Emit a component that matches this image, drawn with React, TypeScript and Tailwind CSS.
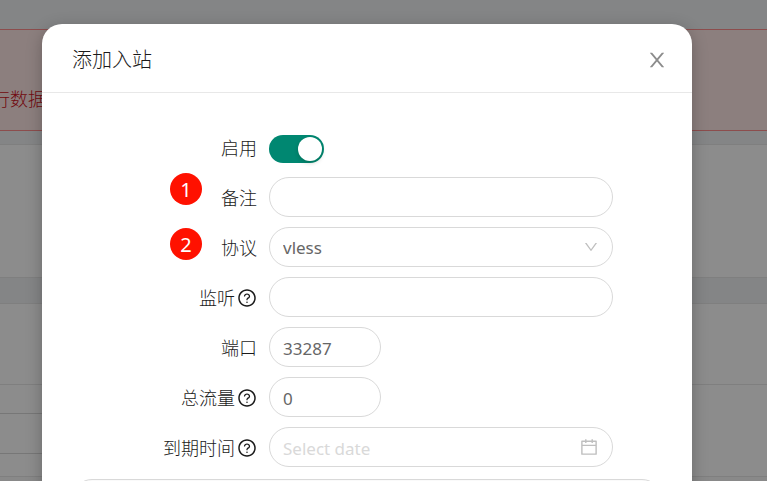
import React from 'react';
import { AiOutlineCalendar, AiOutlineDown, AiOutlineQuestionCircle } from 'react-icons/ai';

interface RowProps {
  label: string;
  htmlFor: string;
  help?: boolean;
  children: React.ReactNode;
}

const fieldClass =
  'h-10 rounded-full border border-[#d9d9d9] bg-white px-[13px] pt-0.5 text-[17px] font-normal text-[#666666] outline-none placeholder:text-[#d9d9d9]';

function FormRow({ label, htmlFor, help, children }: RowProps) {
  return (
    <div className="relative flex gap-3">
      <div className="flex h-10 w-[215px] shrink-0 items-center justify-end gap-0.5 pt-0.5 text-[#1a1a1a]">
        <label htmlFor={htmlFor} className="text-lg">
          {label}
        </label>
        {help && <AiOutlineQuestionCircle className="size-5" />}
      </div>
      {children}
    </div>
  );
}

function StepBadge({ step, className }: { step: number; className: string }) {
  return (
    <span
      className={`absolute left-32 flex size-8 items-center justify-center rounded-full bg-[#ff1100] pt-0.5 text-xl font-normal text-white ${className}`}
    >
      {step}
    </span>
  );
}

function CloseIcon() {
  return (
    <svg viewBox="64 64 896 896" className="size-5" fill="currentColor" aria-hidden="true">
      <path d="M563.8 512l262.5-312.9c4.4-5.2.7-13.1-6.1-13.1h-79.8c-4.7 0-9.2 2.1-12.3 5.7L511.6 449.8 295.1 191.7c-3-3.6-7.5-5.7-12.3-5.7H203c-6.8 0-10.5 7.9-6.1 13.1L459.4 512 196.9 824.9A7.95 7.95 0 0 0 203 838h79.8c4.7 0 9.2-2.1 12.3-5.7l216.5-258.1 216.5 258.1c3 3.6 7.5 5.7 12.3 5.7h79.8c6.8 0 10.5-7.9 6.1-13.1L563.8 512z" />
    </svg>
  );
}

function PageBackground() {
  return (
    <div className="flex min-h-screen flex-col bg-[#f0f2f5] pt-[29px]">
      <div className="h-[102px] border-y border-[#ff8c8c] bg-[#ffe8e6] pt-[55px] text-lg text-[#cf1322]">
        <div className="flex w-[46px] justify-end whitespace-nowrap">行数据</div>
      </div>
      <div className="mt-[13px] h-[134px] border-y border-[#e8e8e8] bg-white" />
      <div className="mt-[25px] flex grow flex-col border-t border-[#e8e8e8] bg-white">
        <div className="h-[81px] border-b border-[#e8e8e8]" />
        <div className="mt-7 h-[41px] w-1/2 border-y border-[#d9d9d9]" />
        <div className="mt-[22px] grow border-t border-[#e8e8e8] bg-[#fafafa]" />
      </div>
    </div>
  );
}

function InboundModal() {
  const [enabled, setEnabled] = React.useState(true);

  return (
    <div
      role="dialog"
      aria-labelledby="modal-title"
      className="min-h-full rounded-t-[20px] bg-white shadow-[0_4px_16px_rgba(0,0,0,0.25)]"
    >
      <header className="flex h-[69px] items-center justify-between border-b border-[#e8e8e8] px-[30px] pt-1">
        <h1 id="modal-title" className="text-xl font-light text-[#1a1a1a]">
          添加入站
        </h1>
        <button type="button" aria-label="Close" className="-mr-[5px] text-[#8c8c8c]">
          <CloseIcon />
        </button>
      </header>

      <form className="flex flex-col gap-2.5 pt-[34px]">
        <FormRow label="启用" htmlFor="enable">
          <div className="flex h-10 items-center pt-1">
            <span className="relative inline-flex h-7 w-[55px]">
              <input
                id="enable"
                type="checkbox"
                role="switch"
                checked={enabled}
                onChange={(e) => setEnabled(e.target.checked)}
                className="peer size-full appearance-none rounded-full bg-[#bfbfbf] checked:bg-[#008771]"
              />
              <span className="pointer-events-none absolute top-0.5 left-0.5 size-6 rounded-full bg-white shadow-[0_2px_4px_rgba(0,35,11,0.2)] peer-checked:right-0.5 peer-checked:left-auto" />
            </span>
          </div>
        </FormRow>

        <FormRow label="备注" htmlFor="remark">
          <StepBadge step={1} className="-top-1" />
          <input id="remark" type="text" className={`${fieldClass} w-[344px]`} />
        </FormRow>

        <FormRow label="协议" htmlFor="protocol">
          <StepBadge step={2} className="top-px" />
          <div className="relative w-[344px]">
            <select id="protocol" defaultValue="vless" className={`${fieldClass} w-full appearance-none`}>
              <option value="vless">vless</option>
            </select>
            <AiOutlineDown className="pointer-events-none absolute top-3 right-[14px] size-4 text-[#bfbfbf]" />
          </div>
        </FormRow>

        <FormRow label="监听" htmlFor="listen" help>
          <input id="listen" type="text" className={`${fieldClass} w-[344px]`} />
        </FormRow>

        <FormRow label="端口" htmlFor="port">
          <input id="port" type="text" inputMode="numeric" defaultValue="33287" className={`${fieldClass} w-28`} />
        </FormRow>

        <FormRow label="总流量" htmlFor="total" help>
          <input id="total" type="text" inputMode="numeric" defaultValue="0" className={`${fieldClass} w-28`} />
        </FormRow>

        <FormRow label="到期时间" htmlFor="expiry" help>
          <div className="relative w-[344px]">
            <input id="expiry" type="text" placeholder="Select date" className={`${fieldClass} w-full`} />
            <AiOutlineCalendar className="pointer-events-none absolute top-2.5 right-[14px] size-5 text-[#bfbfbf]" />
          </div>
        </FormRow>
      </form>

      <section className="mx-[30px] mt-3 h-14 rounded-[20px] border border-[#d9d9d9] bg-[#fafafa]" />
    </div>
  );
}

export default function App() {
  return (
    <div className="relative h-screen overflow-hidden font-['Noto_Sans','Noto_Sans_CJK_SC',sans-serif] font-light">
      <PageBackground />
      <div className="absolute inset-0 overflow-hidden bg-black/45 pt-6 pr-[75px] pl-[42px]">
        <InboundModal />
      </div>
    </div>
  );
}
